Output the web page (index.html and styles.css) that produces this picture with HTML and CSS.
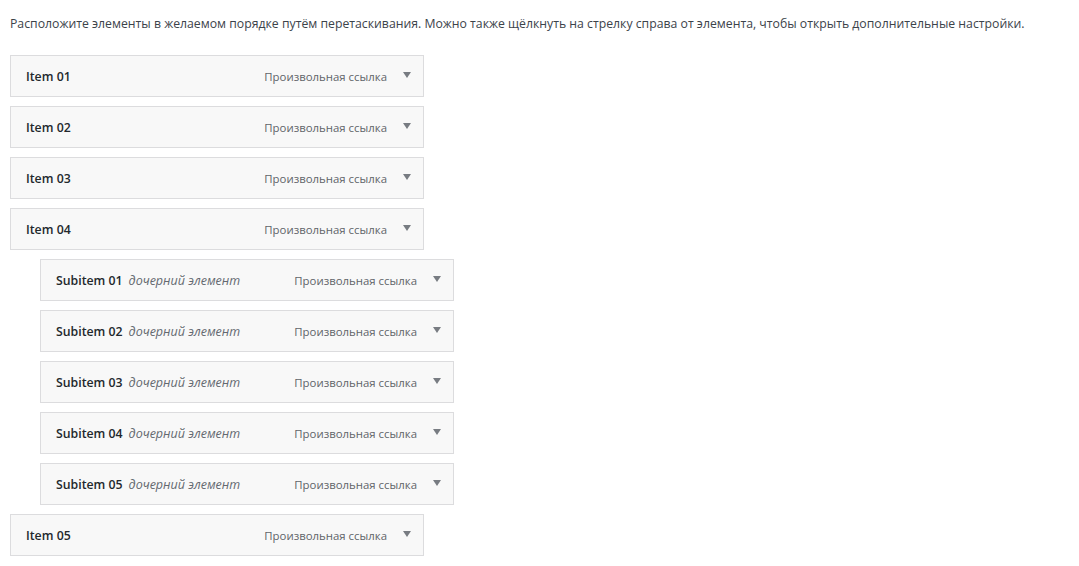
FILE: index.html
```html
<!DOCTYPE html>
<html lang="ru">
<head>
<meta charset="utf-8">
<link rel="stylesheet" href="styles.css">
</head>
<body>
<p class="intro">Расположите элементы в желаемом порядке путём перетаскивания. Можно также щёлкнуть на стрелку справа от элемента, чтобы открыть дополнительные настройки.</p>
<ul class="menu">
  <li class="item"><span class="title">Item 01</span><span class="type">Произвольная ссылка</span><span class="arrow"></span></li>
  <li class="item"><span class="title">Item 02</span><span class="type">Произвольная ссылка</span><span class="arrow"></span></li>
  <li class="item"><span class="title">Item 03</span><span class="type">Произвольная ссылка</span><span class="arrow"></span></li>
  <li class="item"><span class="title">Item 04</span><span class="type">Произвольная ссылка</span><span class="arrow"></span></li>
  <li class="item sub"><span class="title">Subitem 01<em class="child">дочерний элемент</em></span><span class="type">Произвольная ссылка</span><span class="arrow"></span></li>
  <li class="item sub"><span class="title">Subitem 02<em class="child">дочерний элемент</em></span><span class="type">Произвольная ссылка</span><span class="arrow"></span></li>
  <li class="item sub"><span class="title">Subitem 03<em class="child">дочерний элемент</em></span><span class="type">Произвольная ссылка</span><span class="arrow"></span></li>
  <li class="item sub"><span class="title">Subitem 04<em class="child">дочерний элемент</em></span><span class="type">Произвольная ссылка</span><span class="arrow"></span></li>
  <li class="item sub"><span class="title">Subitem 05<em class="child">дочерний элемент</em></span><span class="type">Произвольная ссылка</span><span class="arrow"></span></li>
  <li class="item"><span class="title">Item 05</span><span class="type">Произвольная ссылка</span><span class="arrow"></span></li>
</ul>
</body>
</html>
```
FILE: styles.css
```css
* { box-sizing: border-box; }
body {
  margin: 0;
  padding: 0 10px;
  background: #ffffff;
  font-family: "Open Sans", "Noto Sans", sans-serif;
  color: #3c434a;
}
.intro {
  margin: 0;
  padding-top: 14px;
  font-size: 12.25px;
  line-height: 20px;
  color: #3c434a;
  white-space: nowrap;
}
.menu {
  list-style: none;
  margin: 21px 0 0;
  padding: 0;
  display: flex;
  flex-direction: column;
  gap: 9px;
}
.item {
  width: 414px;
  height: 42px;
  border: 1px solid #dcdcde;
  background: #f8f8f8;
  display: flex;
  align-items: center;
  padding: 0 0 0 15px;
}
.item.sub { margin-left: 30px; }
.title {
  flex: 1;
  font-size: 12.3px;
  font-weight: 600;
  color: #23282d;
  white-space: nowrap;
}
.child {
  font-weight: 400;
  font-style: italic;
  color: #646970;
  margin-left: 6px;
  font-size: 12.5px;
}
.type {
  font-size: 11.4px;
  color: #5f6469;
  white-space: nowrap;
}
.arrow {
  width: 36px;
  height: 100%;
  display: flex;
  align-items: center;
  justify-content: flex-end;
  padding-right: 12px;
}
.arrow::before {
  content: "";
  width: 0;
  height: 0;
  border-left: 4px solid transparent;
  border-right: 4px solid transparent;
  border-top: 6px solid #787c82;
  margin-top: -3px;
}
```
